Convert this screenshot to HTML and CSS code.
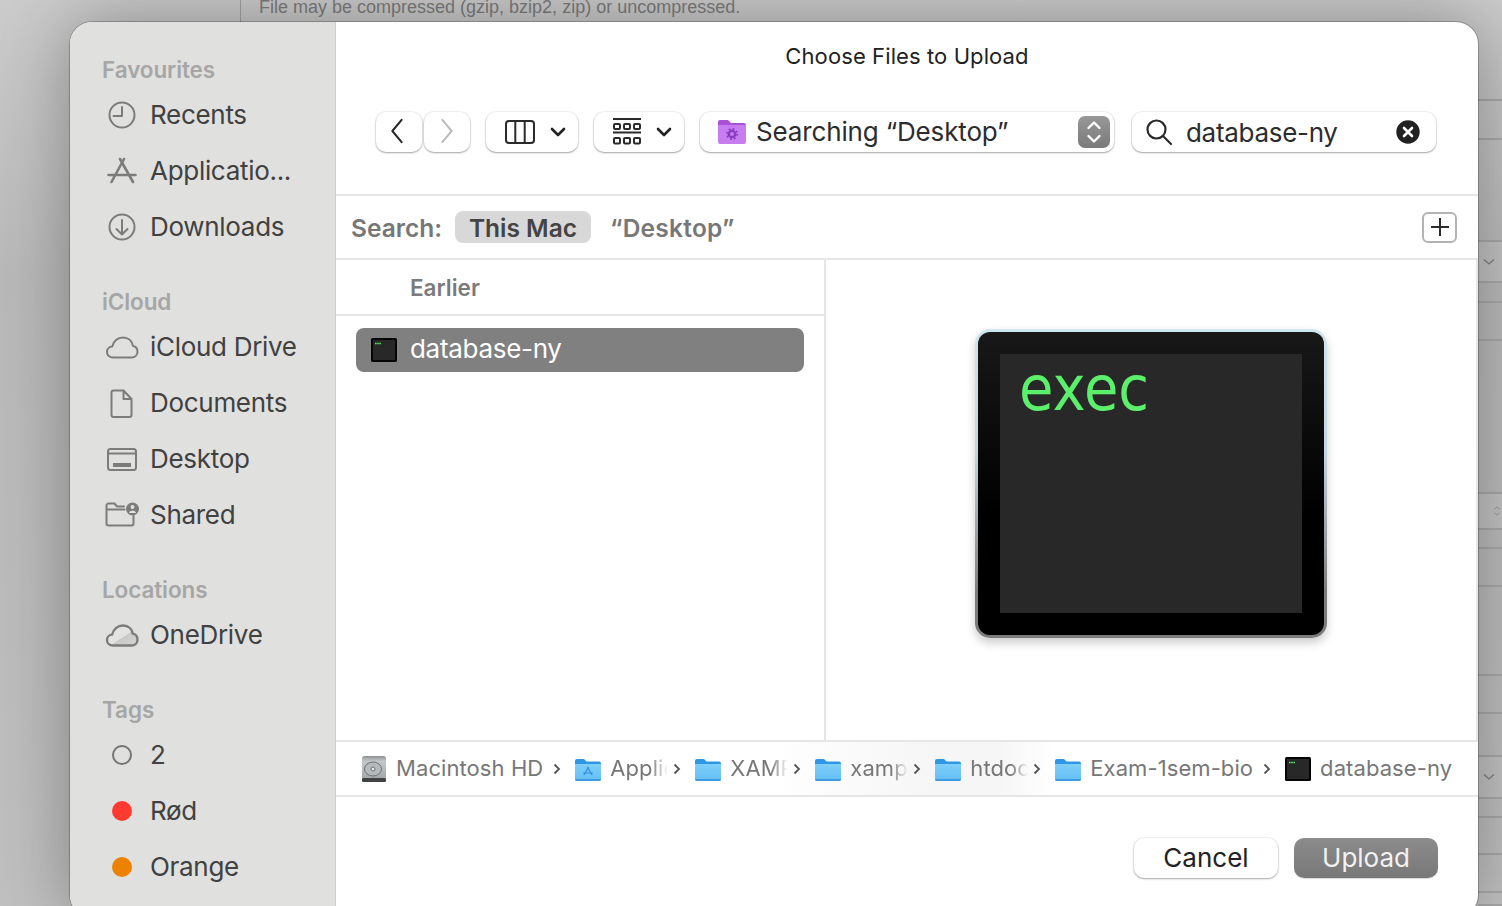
FILE: index.html
```html
<!DOCTYPE html>
<html lang="en">
<head>
    <meta charset="UTF-8">
    <title>Choose Files to Upload</title>
    <link rel="stylesheet" href="styles.css">
</head>
<body>

<svg class="defs" width="0" height="0" aria-hidden="true">
    <defs>
        <linearGradient id="folderBody" x1="0" y1="0" x2="0" y2="1">
            <stop offset="0" stop-color="#7fd0fb"/>
            <stop offset="1" stop-color="#62bdf5"/>
        </linearGradient>
        <linearGradient id="hdBody" x1="0" y1="0" x2="0" y2="1">
            <stop offset="0" stop-color="#8d9294"/>
            <stop offset="0.2" stop-color="#c4c8ca"/>
            <stop offset="1" stop-color="#9da2a4"/>
        </linearGradient>
        <linearGradient id="driveBody" x1="0" y1="0" x2="1" y2="1">
            <stop offset="0" stop-color="#e6e6e5"/>
            <stop offset="0.55" stop-color="#e2e2e1"/>
            <stop offset="0.56" stop-color="#c9c9c8"/>
            <stop offset="1" stop-color="#d4d4d3"/>
        </linearGradient>
        <symbol id="folder" viewBox="0 0 28 28">
            <path d="M1 6a2 2 0 0 1 2-2h7l2.500 2.500H25a2 2 0 0 1 2 2V10H1z" fill="#2f97e6"/>
            <path d="M1 9h26v15a2 2 0 0 1-2 2H3a2 2 0 0 1-2-2z" fill="url(#folderBody)"/>
            <path d="M1 24h26a2 2 0 0 1-2 2H3a2 2 0 0 1-2-2z" fill="#3c9ae0"/>
        </symbol>
        <symbol id="exec" viewBox="0 0 28 28">
            <rect x="1" y="2" width="26" height="24" rx="1.500" fill="#050505"/>
            <rect x="3" y="4" width="22" height="20" fill="#282828"/>
            <path d="M5 7.500h6" stroke="#56e565" stroke-width="1.400" stroke-dasharray="1.200 .4"/>
        </symbol>
        <symbol id="cloud" viewBox="0 0 36 36">
            <path d="M9 28.500C5.500 28.500 3 26 3 23c0-3 2.300-5.300 5.200-5.400C9.300 12.300 13.500 8.500 19 8.500c5.300 0 9 3.600 9.800 8.200 2.800.6 4.700 3 4.700 6 0 3.300-2.500 5.800-6 5.800z"/>
        </symbol>
    </defs>
</svg>

<div class="page">
    <div class="page-left"></div>
    <div class="page-main">
        <p class="page-hint">File may be compressed (gzip, bzip2, zip) or uncompressed.</p>
    </div>
    <div class="page-rows">
        <div></div><div></div><div></div>
        <div class="page-cell"><svg class="page-chevron" viewBox="0 0 12 8"><path d="M1 1.500l5 4.500 5-4.500"/></svg></div>
        <div></div><div></div><div></div>
        <div class="page-cell"><svg class="page-stepper" viewBox="0 0 12 14"><path d="M3 5l3-3 3 3M3 9l3 3 3-3"/></svg></div>
        <div></div><div></div><div></div><div></div><div></div>
        <div class="page-cell"><svg class="page-chevron" viewBox="0 0 12 8"><path d="M1 1.500l5 4.500 5-4.500"/></svg></div>
        <div></div><div></div><div></div><div></div>
    </div>
</div>

<div class="dialog">
    <aside class="sidebar">
        <h3 class="side-title">Favourites</h3>
        <div class="side-item">
            <svg class="side-icon" viewBox="0 0 36 36"><circle cx="18" cy="18" r="12.500"/><path d="M18 10v9H9.500"/></svg>
            <span>Recents</span>
        </div>
        <div class="side-item">
            <svg class="side-icon side-icon-bold" viewBox="0 0 36 36"><path d="M20 6L7.500 29M16 6l13 23M4.500 22h27"/></svg>
            <span>Applicatio...</span>
        </div>
        <div class="side-item">
            <svg class="side-icon" viewBox="0 0 36 36"><circle cx="18" cy="18" r="12.500"/><path d="M18 11v14M12.500 20l5.500 5.500 5.500-5.500"/></svg>
            <span>Downloads</span>
        </div>

        <h3 class="side-title">iCloud</h3>
        <div class="side-item">
            <svg class="side-icon" viewBox="0 0 36 36"><use href="#cloud"/></svg>
            <span>iCloud Drive</span>
        </div>
        <div class="side-item">
            <svg class="side-icon" viewBox="0 0 36 36"><path d="M9.500 5.500h10l8 8.500v16a2 2 0 0 1-2 2h-16a2 2 0 0 1-2-2v-22.500a2 2 0 0 1 2-2zM19.500 5.500v8.500h8"/></svg>
            <span>Documents</span>
        </div>
        <div class="side-item">
            <svg class="side-icon" viewBox="0 0 36 36"><rect x="4" y="8" width="28" height="21" rx="2.500"/><path d="M4 12.500h28"/><rect class="icon-fill" x="9" y="22" width="18" height="4"/></svg>
            <span>Desktop</span>
        </div>
        <div class="side-item">
            <svg class="side-icon" viewBox="0 0 36 36">
                <path d="M2.500 27V8.500a2 2 0 0 1 2-2h6l2.500 3h7M2.500 12.500h18M2.500 26.500a2 2 0 0 0 2 2h23a2 2 0 0 0 2-2V19"/>
                <circle class="icon-fill" cx="28.500" cy="12" r="6.500"/>
                <circle class="icon-cut" cx="28.500" cy="10" r="2"/>
                <path class="icon-cut" d="M24.800 16a3.800 3.300 0 0 1 7.400 0z"/>
            </svg>
            <span>Shared</span>
        </div>

        <h3 class="side-title">Locations</h3>
        <div class="side-item">
            <svg class="side-icon side-icon-drive" viewBox="0 0 36 36"><use href="#cloud"/></svg>
            <span>OneDrive</span>
        </div>

        <h3 class="side-title">Tags</h3>
        <div class="side-item">
            <span class="tag-box"><i class="tag tag-none"></i></span>
            <span>2</span>
        </div>
        <div class="side-item">
            <span class="tag-box"><i class="tag tag-red"></i></span>
            <span>Rød</span>
        </div>
        <div class="side-item">
            <span class="tag-box"><i class="tag tag-orange"></i></span>
            <span>Orange</span>
        </div>
    </aside>

    <main class="panel">
        <div class="title">Choose Files to Upload</div>

        <div class="toolbar">
            <div class="nav-group">
                <button class="tool-btn nav-btn">
                    <svg class="nav-arrow nav-back" viewBox="0 0 16 28"><path d="M13 2L3 14l10 12"/></svg>
                </button>
                <button class="tool-btn nav-btn">
                    <svg class="nav-arrow nav-off" viewBox="0 0 16 28"><path d="M3 2l10 12L3 26"/></svg>
                </button>
            </div>
            <button class="tool-btn view-btn">
                <svg class="view-icon" width="32" height="26" viewBox="0 0 32 26"><rect x="2" y="2" width="28" height="22" rx="3"/><path d="M11.300 2v22M20.700 2v22"/></svg>
                <svg class="caret" viewBox="0 0 16 10"><path d="M2 2l6 6 6-6"/></svg>
            </button>
            <button class="tool-btn group-btn">
                <svg class="gallery-icon" width="28" height="28" viewBox="0 0 28 28">
                    <path d="M0 1h28M0 14.500h28"/>
                    <rect x="1" y="6" width="6" height="5" rx="1"/><rect x="11" y="6" width="6" height="5" rx="1"/><rect x="21" y="6" width="6" height="5" rx="1"/>
                    <rect x="1" y="20" width="6" height="5.500" rx="1"/><rect x="11" y="20" width="6" height="5.500" rx="1"/><rect x="21" y="20" width="6" height="5.500" rx="1"/>
                </svg>
                <svg class="caret" viewBox="0 0 16 10"><path d="M2 2l6 6 6-6"/></svg>
            </button>
            <button class="tool-btn where-btn">
                <svg class="smart-folder" width="30" height="28" viewBox="0 0 30 28">
                    <path d="M1 4a2 2 0 0 1 2-2h8l3 3h13a2 2 0 0 1 2 2v3H1z" fill="#a94fd8"/>
                    <path d="M1 7h28v17a2 2 0 0 1-2 2H3a2 2 0 0 1-2-2z" fill="#c77df0"/>
                    <circle cx="15" cy="16" r="3.200" fill="none" stroke="#8a3cc0" stroke-width="2.400"/>
                    <circle cx="15" cy="16" r="5.200" fill="none" stroke="#8a3cc0" stroke-width="1.600" stroke-dasharray="1.800 2.280"/>
                </svg>
                <span class="where-text">Searching “Desktop”</span>
                <span class="stepper">
                    <svg width="16" height="26" viewBox="0 0 16 26"><path d="M2.500 9L8 3.500 13.500 9M2.500 17L8 22.500 13.500 17"/></svg>
                </span>
            </button>
            <div class="tool-btn search-field">
                <svg class="search-glass" width="28" height="28" viewBox="0 0 28 28"><circle cx="11.500" cy="11.500" r="9"/><path d="M18 18l8 8"/></svg>
                <span class="search-value">database-ny</span>
                <svg class="search-clear" width="26" height="26" viewBox="0 0 26 26"><circle cx="13" cy="13" r="13"/><path d="M9 9l8 8M17 9l-8 8"/></svg>
            </div>
        </div>

        <div class="scope-bar">
            <span class="scope-label">Search:</span>
            <span class="scope-pill">This Mac</span>
            <span class="scope-other">“Desktop”</span>
            <button class="scope-add"><svg width="20" height="20" viewBox="0 0 20 20"><path d="M10 1v18M1 10h18"/></svg></button>
        </div>

        <div class="browser">
            <section class="results">
                <div class="results-head">Earlier</div>
                <div class="result-row">
                    <svg class="result-icon" width="28" height="28"><use href="#exec"/></svg>
                    <span>database-ny</span>
                </div>
            </section>
            <section class="preview">
                <div class="exec-frame">
                    <div class="exec-icon">
                        <div class="exec-screen"><span class="exec-text">exec</span></div>
                    </div>
                </div>
            </section>
        </div>

        <nav class="pathbar">
            <svg class="path-icon" width="28" height="28" viewBox="0 0 28 28">
                <rect x="2" y="1" width="24" height="26" rx="2.500" fill="url(#hdBody)"/>
                <rect x="2" y="23" width="24" height="4" rx="1.500" fill="#3f4344"/>
                <ellipse cx="13" cy="14" rx="8.500" ry="7" fill="#b5babc" stroke="#6c7173"/>
                <circle cx="13" cy="14" r="2" fill="#e8eaea" stroke="#6c7173"/>
            </svg>
            <span class="path-name">Macintosh HD</span>
            <svg class="path-sep" viewBox="0 0 8 12"><path d="M1.500 1.500L6 6l-4.500 4.500"/></svg>

            <svg class="path-icon" width="28" height="28" viewBox="0 0 28 28">
                <use href="#folder"/>
                <path d="M14.500 12l-4.500 8M13.500 12l4.500 8M9 18h10" stroke="#2f8fdc" stroke-width="1.200" fill="none"/>
            </svg>
            <span class="path-name path-cut">Applic</span>
            <svg class="path-sep" viewBox="0 0 8 12"><path d="M1.500 1.500L6 6l-4.500 4.500"/></svg>

            <svg class="path-icon" width="28" height="28"><use href="#folder"/></svg>
            <span class="path-name path-cut">XAMP</span>
            <svg class="path-sep" viewBox="0 0 8 12"><path d="M1.500 1.500L6 6l-4.500 4.500"/></svg>

            <svg class="path-icon" width="28" height="28"><use href="#folder"/></svg>
            <span class="path-name path-cut">xamp</span>
            <svg class="path-sep" viewBox="0 0 8 12"><path d="M1.500 1.500L6 6l-4.500 4.500"/></svg>

            <svg class="path-icon" width="28" height="28"><use href="#folder"/></svg>
            <span class="path-name path-cut">htdoc</span>
            <svg class="path-sep" viewBox="0 0 8 12"><path d="M1.500 1.500L6 6l-4.500 4.500"/></svg>

            <svg class="path-icon" width="28" height="28"><use href="#folder"/></svg>
            <span class="path-name">Exam-1sem-bio</span>
            <svg class="path-sep" viewBox="0 0 8 12"><path d="M1.500 1.500L6 6l-4.500 4.500"/></svg>

            <svg class="path-icon" width="28" height="28"><use href="#exec"/></svg>
            <span class="path-name">database-ny</span>
        </nav>

        <footer class="actions">
            <button class="action-btn">Cancel</button>
            <button class="action-btn action-upload">Upload</button>
        </footer>
    </main>
</div>

</body>
</html>
```

FILE: styles.css
```css
* {
    box-sizing: border-box;
}
html, body {
    height: 100%;
}
body {
    margin: 0;
    overflow: hidden;
    font-family: Inter, "Liberation Sans", sans-serif;
    background-color: #c4c4c4;
    position: relative;
}
button {
    font-family: inherit;
    padding: 0;
    border: none;
}
.defs {
    display: block;
    height: 0;
}

/* page behind the sheet */
.page {
    display: flex;
    height: 906px;
    background: linear-gradient(#cbcbcb, #b9b9b9 30%, #bcbcbc 70%, #c0c0c0);
}
.page-left {
    width: 240px;
}
.page-main {
    flex: 1;
    border-left: 1px solid #a2a2a2;
}
.page-hint {
    margin: -3px 0 0 18px;
    font-family: "Liberation Sans", sans-serif;
    font-size: 18px;
    line-height: 20px;
    color: #7c7c7c;
}
.page-rows {
    width: 24px;
    display: grid;
    grid-template-rows: 101px 39px 102px 41px 20px 38px 153px 36px 19px 38px 89px 38px 43px 42px 19px 37px 38px 13px;
}
.page-rows > div {
    border-bottom: 2px solid #a8a8a8;
}
.page-cell {
    display: flex;
    align-items: center;
    padding-left: 5px;
    background-color: #c2c2c2;
}
.page-chevron {
    width: 12px;
    height: 8px;
    fill: none;
    stroke: #7d7d7d;
    stroke-width: 1.300;
}
.page-stepper {
    width: 10px;
    height: 14px;
    margin-left: 9px;
    fill: none;
    stroke: #8a8a8a;
}

/* the sheet */
.dialog {
    position: absolute;
    left: 70px;
    top: 22px;
    width: 1408px;
    height: 895px;
    display: flex;
    overflow: hidden;
    background-color: white;
    border-radius: 22px;
    box-shadow: 0 0 0 1px rgba(0, 0, 0, 0.22), 0 0 70px rgba(0, 0, 0, 0.32);
}

/* sidebar */
.sidebar {
    width: 266px;
    flex-shrink: 0;
    padding: 31px 0 0 0;
    background-color: #e0e0de;
    border-right: 1px solid #cfcfcf;
}
.side-title {
    height: 34px;
    margin: 30px 0 0 32px;
    font-size: 22.500px;
    font-weight: 600;
    line-height: 34px;
    letter-spacing: -0.100px;
    color: #a6a6a6;
}
.side-title:first-child {
    margin-top: 0;
}
.side-item {
    display: flex;
    align-items: center;
    gap: 10px;
    height: 56px;
    padding-left: 34px;
    font-size: 26px;
    letter-spacing: -0.300px;
    color: #414141;
}
.side-item span:last-child {
    padding-bottom: 2px;
}
.side-icon {
    width: 36px;
    height: 36px;
    flex-shrink: 0;
    fill: none;
    stroke: #7c7c7c;
    stroke-width: 2;
    stroke-linecap: round;
    stroke-linejoin: round;
}
.side-icon-bold {
    stroke-width: 2.600;
}
.side-icon-drive {
    fill: url(#driveBody);
    stroke-width: 2.400;
}
.icon-fill {
    fill: #7c7c7c;
    stroke: none;
}
.icon-cut {
    fill: #e0e0de;
    stroke: none;
}
.tag-box {
    display: flex;
    align-items: center;
    justify-content: center;
    width: 36px;
}
.tag {
    display: block;
    width: 20px;
    height: 20px;
    border-radius: 50%;
}
.tag-none {
    border: 2.500px solid #747474;
}
.tag-red {
    background-color: #ff3a30;
}
.tag-orange {
    background-color: #ec8200;
}

/* main panel */
.panel {
    flex: 1;
    min-width: 0;
    display: flex;
    flex-direction: column;
}
.title {
    height: 70px;
    padding-top: 19px;
    text-align: center;
    font-size: 22px;
    line-height: 30px;
    letter-spacing: 0.100px;
    color: #222;
}

/* toolbar */
.toolbar {
    display: flex;
    align-items: flex-start;
    gap: 16px;
    height: 104px;
    padding: 20px 0 0 40px;
    border-bottom: 2px solid #e6e6e6;
}
.tool-btn {
    display: flex;
    align-items: center;
    height: 40px;
    background-color: white;
    border-radius: 10px;
    box-shadow: 0 1px 2px rgba(0, 0, 0, 0.32), 0 0 0 1px rgba(0, 0, 0, 0.05);
}
.nav-group {
    display: flex;
    gap: 2px;
}
.nav-btn {
    justify-content: center;
    width: 46px;
    padding-bottom: 2px;
}
.nav-arrow {
    width: 16px;
    height: 26px;
    fill: none;
    stroke: #2a2a2a;
    stroke-width: 2.200;
    stroke-linecap: round;
    stroke-linejoin: round;
}
.nav-back {
    margin-right: 4px;
}
.nav-off {
    stroke: #bcbcbc;
}
.view-btn {
    width: 92px;
    padding-left: 18px;
    gap: 14px;
}
.group-btn {
    width: 90px;
    padding-left: 19px;
    gap: 15px;
}
.view-icon, .gallery-icon {
    fill: none;
    stroke: #2a2a2a;
    stroke-width: 2;
}
.caret {
    width: 16px;
    height: 10px;
    fill: none;
    stroke: #222;
    stroke-width: 2.600;
    stroke-linecap: round;
    stroke-linejoin: round;
}
.where-btn {
    width: 414px;
    padding-left: 17px;
    gap: 9px;
    font-size: 26px;
    letter-spacing: -0.150px;
    color: #2c2c2c;
}
.where-text {
    flex: 1;
    padding-bottom: 2px;
    text-align: left;
}
.stepper {
    display: flex;
    align-items: center;
    justify-content: center;
    width: 32px;
    height: 32px;
    margin-right: 4px;
    border-radius: 7px;
    background: linear-gradient(#989898, #7a7a7a);
}
.stepper svg {
    fill: none;
    stroke: white;
    stroke-width: 2.400;
    stroke-linecap: round;
    stroke-linejoin: round;
}
.search-field {
    width: 304px;
    margin-left: 2px;
    padding-left: 13px;
    gap: 13px;
    font-size: 26px;
    letter-spacing: -0.300px;
    color: #2c2c2c;
}
.search-value {
    flex: 1;
}
.search-glass {
    fill: none;
    stroke: #2a2a2a;
    stroke-width: 2.200;
    stroke-linecap: round;
}
.search-clear {
    margin-right: 15px;
    fill: #222;
    stroke: white;
    stroke-width: 2.600;
    stroke-linecap: round;
}

/* search scope */
.scope-bar {
    display: flex;
    align-items: center;
    height: 64px;
    padding: 0 21px 0 15px;
    border-bottom: 2px solid #e6e6e6;
    font-size: 24.500px;
    font-weight: 600;
    color: #777;
}
.scope-label {
    width: 104px;
    padding-top: 2px;
}
.scope-pill {
    display: flex;
    align-items: center;
    justify-content: center;
    width: 136px;
    height: 32px;
    padding-top: 1px;
    border-radius: 8px;
    background-color: #d8d8d8;
    color: #444;
}
.scope-other {
    margin-left: 19px;
    padding-top: 1px;
    letter-spacing: 0.250px;
    flex: 1;
}
.scope-add {
    display: flex;
    align-items: center;
    justify-content: center;
    width: 35px;
    height: 31px;
    background-color: white;
    border: 2px solid #b3b3b3;
    border-radius: 6px;
}
.scope-add svg {
    fill: none;
    stroke: #2a2a2a;
    stroke-width: 2;
}

/* results + preview */
.browser {
    display: flex;
    height: 480px;
    border-right: 2px solid #e8e8e8;
}
.results {
    width: 490px;
    border-right: 2px solid #e6e6e6;
}
.results-head {
    height: 56px;
    padding: 14px 0 0 74px;
    font-size: 22.500px;
    font-weight: 600;
    line-height: 28px;
    color: #7b7b7b;
    border-bottom: 2px solid #e6e6e6;
}
.result-row {
    display: flex;
    align-items: center;
    gap: 12px;
    height: 44px;
    margin: 12px 20px 0 20px;
    padding-left: 14px;
    border-radius: 8px;
    background-color: #808080;
    font-size: 26px;
    letter-spacing: -0.300px;
    color: white;
}
.result-row span {
    padding-bottom: 3px;
}
.preview {
    flex: 1;
    display: flex;
    justify-content: center;
    padding: 69px 0 0 0;
}
.exec-frame {
    width: 352px;
    height: 309px;
    padding: 3px;
    border-radius: 15px;
    background: linear-gradient(#cfe6ef, #c2d6dd 40%, #7c7c7c 85%);
    box-shadow: 0 5px 10px rgba(0, 0, 0, 0.2);
}
.exec-icon {
    height: 303px;
    padding: 22px;
    border-radius: 12px;
    background: linear-gradient(#181818, #000 60%);
}
.exec-screen {
    height: 259px;
    padding: 9px 0 0 19px;
    background-color: #282828;
}
.exec-text {
    display: inline-block;
    font-family: "DejaVu Sans", sans-serif;
    font-size: 56px;
    line-height: 52px;
    color: #5bef6b;
    transform: scaleY(1.120);
    transform-origin: 0 50%;
}

/* path bar */
.pathbar {
    display: flex;
    align-items: center;
    height: 57px;
    padding-left: 24px;
    border-top: 2px solid #e6e6e6;
    border-bottom: 2px solid #e6e6e6;
    background: linear-gradient(to right, white 38%, #f6f6f6 52%, #f6f6f6 58%, white 63%);
    font-size: 22px;
    letter-spacing: 0.080px;
    color: #777;
}
.path-icon {
    flex-shrink: 0;
    margin-right: 8px;
}
.path-name {
    margin-right: 5px;
    padding-bottom: 2px;
    white-space: nowrap;
}
.path-cut {
    width: 58px;
    margin-right: 0;
    -webkit-mask-image: linear-gradient(to right, black 70%, transparent);
    mask-image: linear-gradient(to right, black 70%, transparent);
}
.path-sep {
    flex-shrink: 0;
    width: 8px;
    height: 12px;
    margin: 0 13px 0 5px;
    fill: none;
    stroke: #555;
    stroke-width: 1.800;
}

/* bottom buttons */
.actions {
    display: flex;
    justify-content: flex-end;
    gap: 16px;
    padding: 41px 40px 0 0;
}
.action-btn {
    width: 144px;
    height: 40px;
    padding-bottom: 2px;
    border-radius: 10px;
    background-color: white;
    font-size: 26px;
    color: #222;
    box-shadow: 0 1px 2px rgba(0, 0, 0, 0.32), 0 0 0 1px rgba(0, 0, 0, 0.05);
}
.action-upload {
    background: linear-gradient(#8c8c8c, #787878);
    color: #f2f2f2;
    box-shadow: 0 1px 1px rgba(0, 0, 0, 0.15);
}
```
